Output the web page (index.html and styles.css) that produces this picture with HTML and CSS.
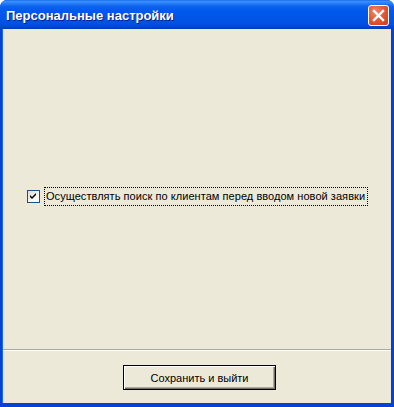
FILE: index.html
```html
<!DOCTYPE html>
<html lang="ru">
<head>
<meta charset="utf-8">
<title>Персональные настройки</title>
<link rel="stylesheet" href="styles.css">
</head>
<body>
<div class="window">
  <div class="titlebar">
    <span class="title">Персональные настройки</span>
    <button class="close" aria-label="Закрыть">
      <svg width="13" height="13" viewBox="0 0 13 13"><path d="M2 2 L11 11 M11 2 L2 11" stroke="#fff" stroke-width="2.4" stroke-linecap="square"/></svg>
    </button>
  </div>
  <div class="client">
    <div class="content">
      <label class="check">
        <span class="box">
          <svg width="7" height="7" viewBox="0 0 7 7"><path d="M0 2 L2 4 L6 0 L6 2 L2 6 L0 4 Z" fill="#000"/></svg>
        </span>
        <span class="label">Осуществлять поиск по клиентам перед вводом новой заявки</span>
      </label>
    </div>
    <div class="sep"></div>
    <div class="footer">
      <button class="btn">Сохранить и выйти</button>
    </div>
  </div>
</div>
</body>
</html>
```

FILE: styles.css
```css
html, body {
  margin: 0;
  padding: 0;
  width: 394px;
  height: 407px;
  overflow: hidden;
  background: #ffffff;
}
.window {
  width: 394px;
  height: 407px;
  display: flex;
  flex-direction: column;
  font-family: "Liberation Sans", Arial, sans-serif;
  background: #0841d6;
  border-radius: 7px 7px 0 0;
  overflow: hidden;
}
.titlebar {
  height: 29px;
  flex: none;
  display: flex;
  align-items: center;
  justify-content: space-between;
  padding: 0 5px 0 6px;
  background: linear-gradient(to bottom, #0a5ce6 0, #3e93ff 1px, #2a82fb 3px, #0f64ee 6px, #0058ec 11px, #0055e8 18px, #0050e0 24px, #0046cf 27px, #003bb3 29px);
}
.title {
  color: #ffffff;
  font-weight: bold;
  font-size: 13px;
  letter-spacing: 0;
  text-shadow: 1px 1px 0 #0a1e8c;
  margin-top: 1px;
}
.close {
  width: 21px;
  height: 21px;
  box-sizing: border-box;
  border: 1px solid #ffffff;
  border-radius: 3px;
  padding: 0;
  display: flex;
  align-items: center;
  justify-content: center;
  background: radial-gradient(circle at 35% 30%, #f08a6a 0, #e35a38 45%, #cf3a18 100%);
  margin-top: 2px;
}
.close svg { display: block; }
.client {
  flex: 1;
  display: flex;
  flex-direction: column;
  margin: 0 3px 4px 3px;
  background: #ece9d8;
  box-shadow: -1px 0 0 #166aee, 1px 0 0 #0c3ec4;
}
.content {
  height: 320px;
  flex: none;
  display: flex;
  align-items: center;
  padding: 15px 0 0 24px;
  box-sizing: border-box;
}
.check {
  display: flex;
  align-items: center;
  gap: 4px;
}
.box {
  width: 13px;
  height: 13px;
  box-sizing: border-box;
  border: 1px solid #1c5180;
  background: linear-gradient(135deg, #dcdcd5 0, #f6f6f3 60%, #ffffff 100%);
  display: flex;
  align-items: center;
  justify-content: center;
}
.box svg { display: block; }
.label {
  font-size: 11px;
  color: #000;
  padding: 3px 3px 3px 2px;
  outline: 1px dotted #000;
  outline-offset: -1px;
  line-height: 13px;
  letter-spacing: 0.05px;
}
.sep {
  height: 1px;
  flex: none;
  background: #aca899;
  border-bottom: 1px solid #ffffff;
}
.footer {
  flex: 1;
  display: flex;
  justify-content: center;
  align-items: flex-start;
  padding-top: 14px;
  padding-left: 5px;
  box-sizing: border-box;
}
.btn {
  width: 153px;
  height: 25px;
  box-sizing: border-box;
  border: 1px solid #000;
  background: #ece9d8;
  box-shadow: inset 1px 1px 0 #ffffff, inset -1px -1px 0 #716f64, inset -2px -2px 0 #aca899;
  font-family: "Liberation Sans", Arial, sans-serif;
  font-size: 11px;
  color: #000;
  padding: 0;
}
```
